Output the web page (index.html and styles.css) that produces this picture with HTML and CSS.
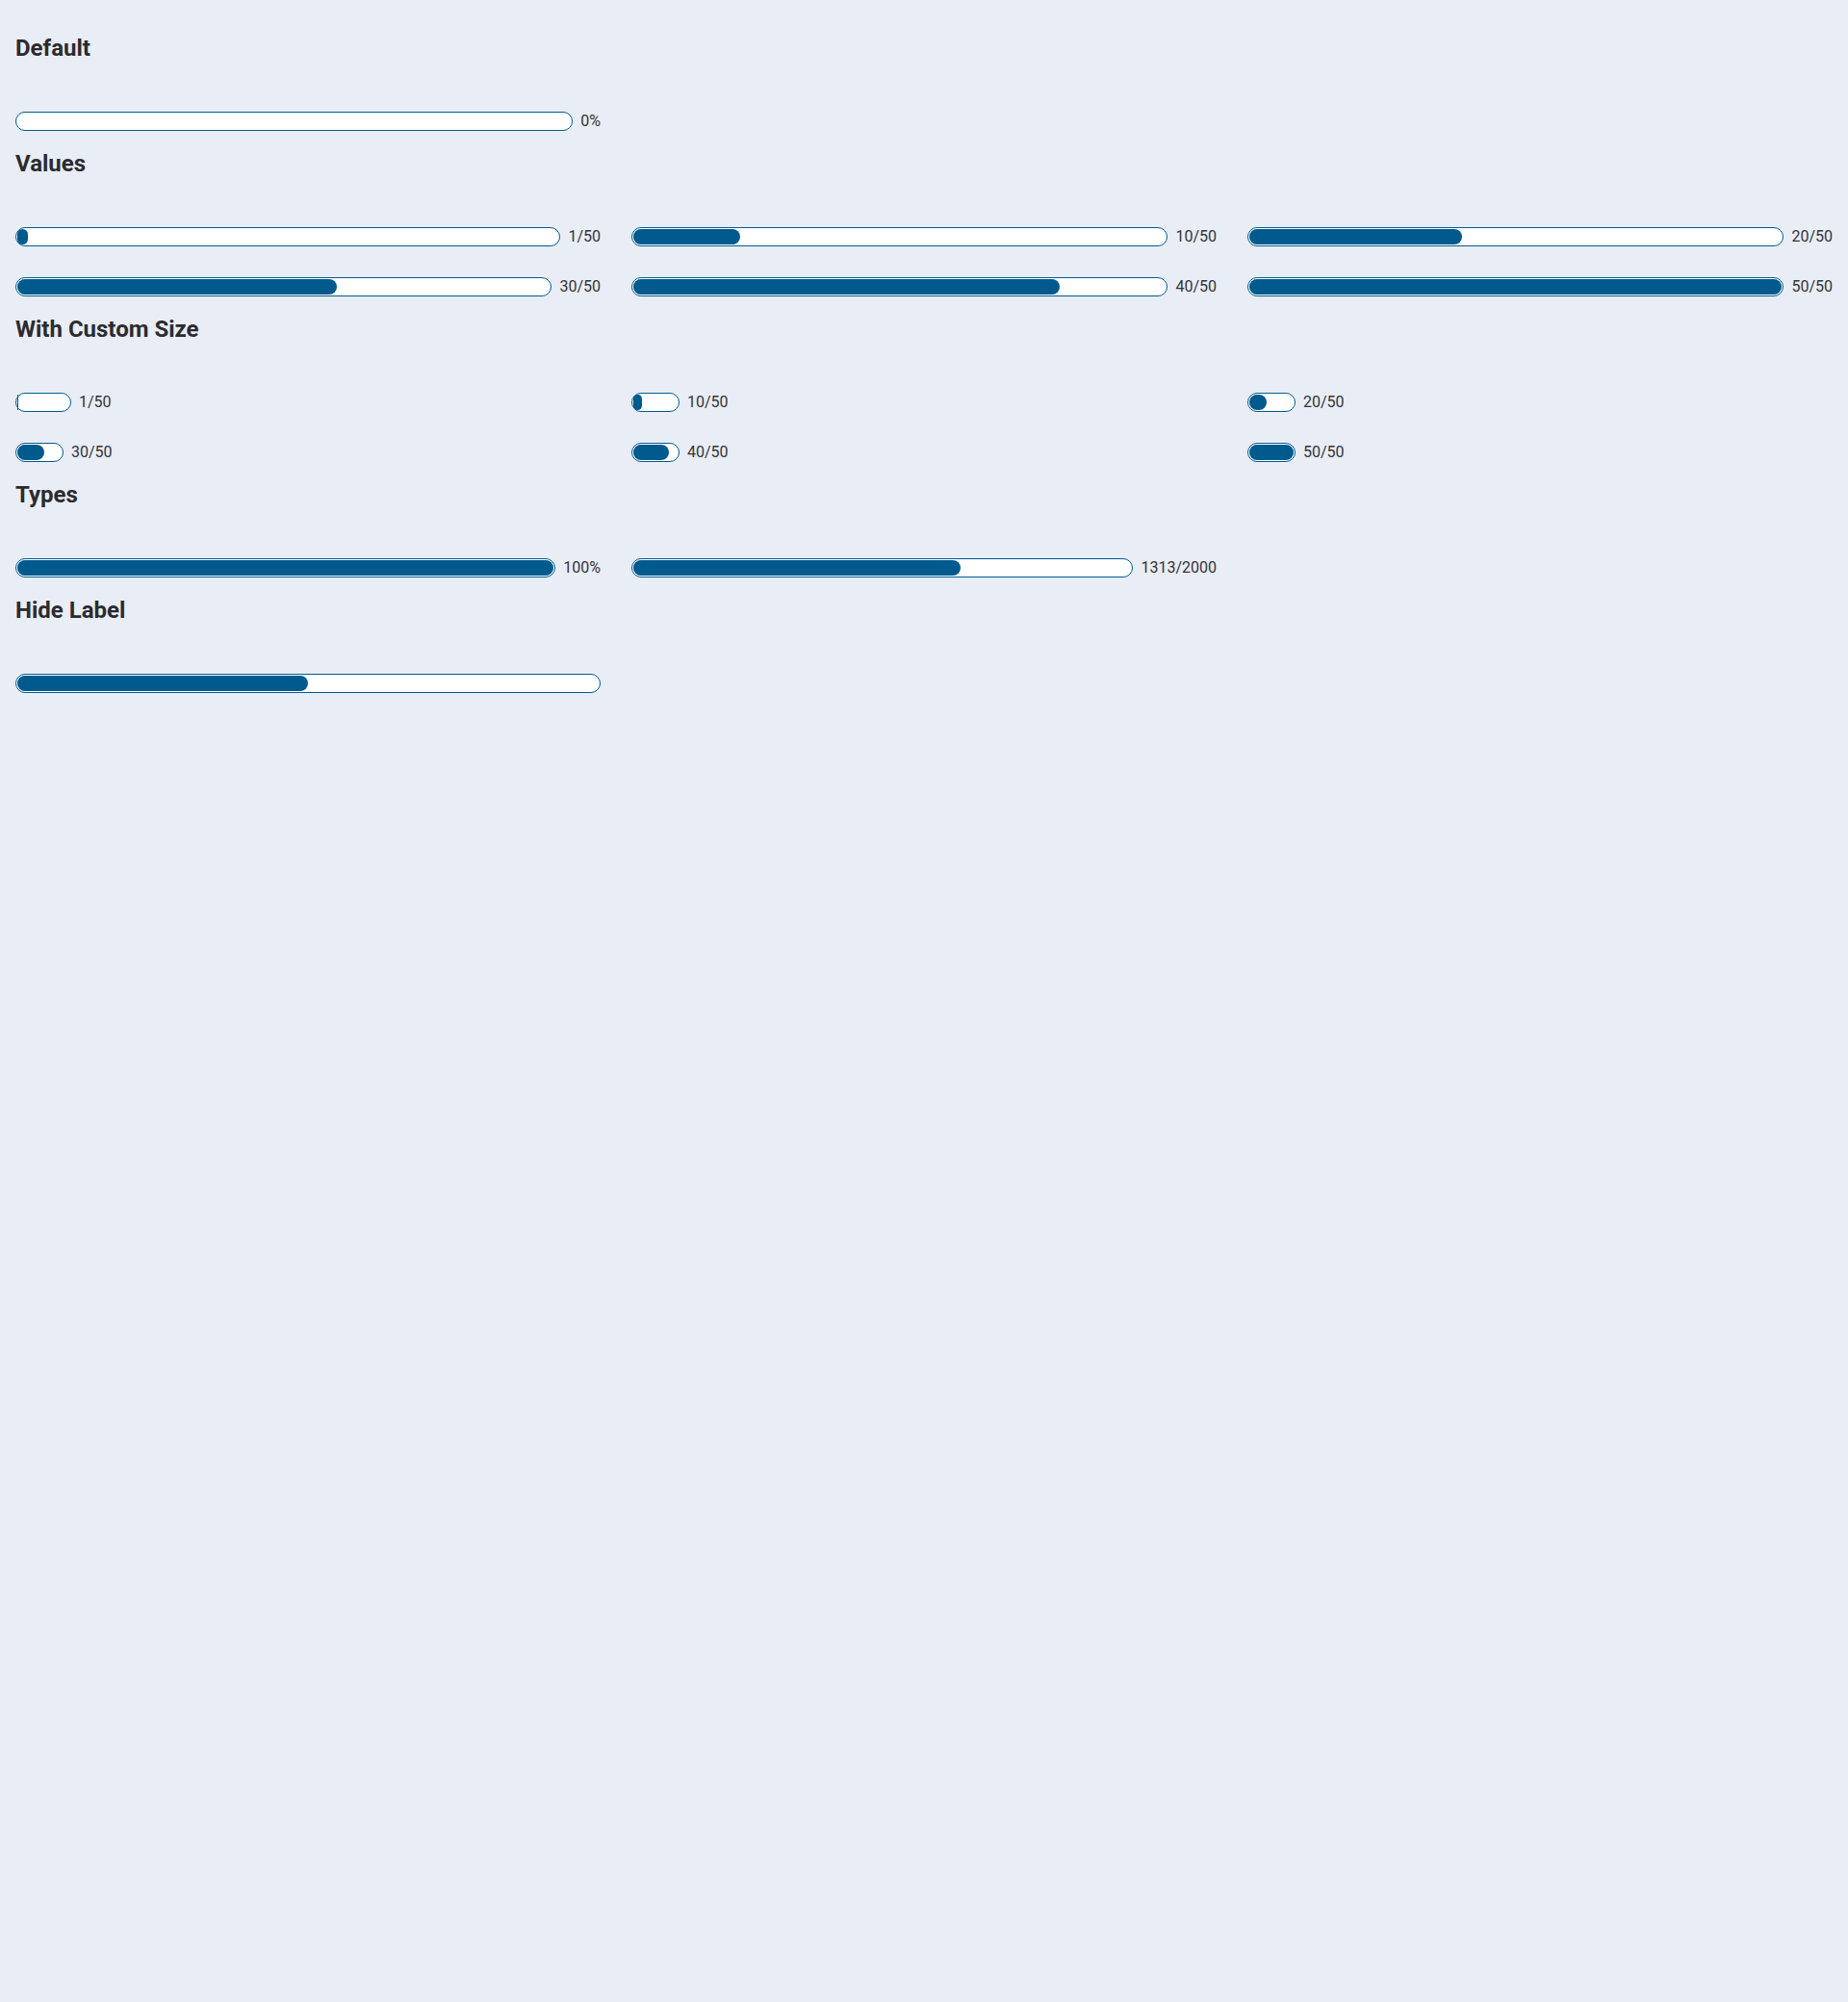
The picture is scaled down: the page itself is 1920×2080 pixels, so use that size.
FILE: index.html
```html
<!DOCTYPE html>
<html lang="en">
<head>
<meta charset="utf-8">
<title>Progress</title>
<link rel="stylesheet" href="styles.css">
</head>
<body>
<main class="page">
  <section class="section">
    <h2 class="title">Default</h2>
    <div class="grid">
      <div class="item">
        <div class="bar"><div class="fill" style="width:0%"></div></div>
        <span class="label">0%</span>
      </div>
    </div>
  </section>

  <section class="section">
    <h2 class="title">Values</h2>
    <div class="grid">
      <div class="item"><div class="bar"><div class="fill" style="width:2%"></div></div><span class="label">1/50</span></div>
      <div class="item"><div class="bar"><div class="fill" style="width:20%"></div></div><span class="label">10/50</span></div>
      <div class="item"><div class="bar"><div class="fill" style="width:40%"></div></div><span class="label">20/50</span></div>
      <div class="item"><div class="bar"><div class="fill" style="width:60%"></div></div><span class="label">30/50</span></div>
      <div class="item"><div class="bar"><div class="fill" style="width:80%"></div></div><span class="label">40/50</span></div>
      <div class="item"><div class="bar"><div class="fill" style="width:100%"></div></div><span class="label">50/50</span></div>
    </div>
  </section>

  <section class="section">
    <h2 class="title">With Custom Size</h2>
    <div class="grid">
      <div class="item"><div class="bar bar-small bar-wide"><div class="fill" style="width:2%"></div></div><span class="label">1/50</span></div>
      <div class="item"><div class="bar bar-small"><div class="fill" style="width:20%"></div></div><span class="label">10/50</span></div>
      <div class="item"><div class="bar bar-small"><div class="fill" style="width:40%"></div></div><span class="label">20/50</span></div>
      <div class="item"><div class="bar bar-small"><div class="fill" style="width:60%"></div></div><span class="label">30/50</span></div>
      <div class="item"><div class="bar bar-small"><div class="fill" style="width:80%"></div></div><span class="label">40/50</span></div>
      <div class="item"><div class="bar bar-small"><div class="fill" style="width:100%"></div></div><span class="label">50/50</span></div>
    </div>
  </section>

  <section class="section">
    <h2 class="title">Types</h2>
    <div class="grid">
      <div class="item"><div class="bar"><div class="fill" style="width:100%"></div></div><span class="label">100%</span></div>
      <div class="item"><div class="bar"><div class="fill" style="width:65.65%"></div></div><span class="label">1313/2000</span></div>
    </div>
  </section>

  <section class="section">
    <h2 class="title">Hide Label</h2>
    <div class="grid">
      <div class="item"><div class="bar"><div class="fill" style="width:50%"></div></div></div>
    </div>
  </section>
</main>
</body>
</html>
```

FILE: styles.css
```css
html, body {
  margin: 0;
  padding: 0;
  background: #e9edf5;
}

body {
  font-family: Roboto, "Liberation Sans", Arial, sans-serif;
  color: #2b2b30;
  min-height: 2080px;
}

.page {
  padding: 32px 16px;
  display: flex;
  flex-direction: column;
  gap: 16px;
}

.section {
  display: flex;
  flex-direction: column;
  gap: 48px;
}

.title {
  margin: 0;
  font-size: 24px;
  line-height: 36px;
  font-weight: 700;
  color: #2b2b30;
}

.grid {
  display: grid;
  grid-template-columns: repeat(3, 1fr);
  gap: 32px;
}

.item {
  display: flex;
  align-items: center;
  gap: 8px;
  height: 20px;
}

.bar {
  flex: 1;
  height: 20px;
  box-sizing: border-box;
  border: 1px solid #005b8f;
  border-radius: 10px;
  background: #ffffff;
  padding: 1px;
  display: flex;
}

.bar-small {
  flex: none;
  width: 50px;
}

.bar-wide {
  width: 58px;
}

.fill {
  height: 100%;
  background: #005a8e;
  border-radius: 8px;
}

.label {
  font-size: 16px;
  line-height: 20px;
  color: #333338;
  white-space: nowrap;
}
```
